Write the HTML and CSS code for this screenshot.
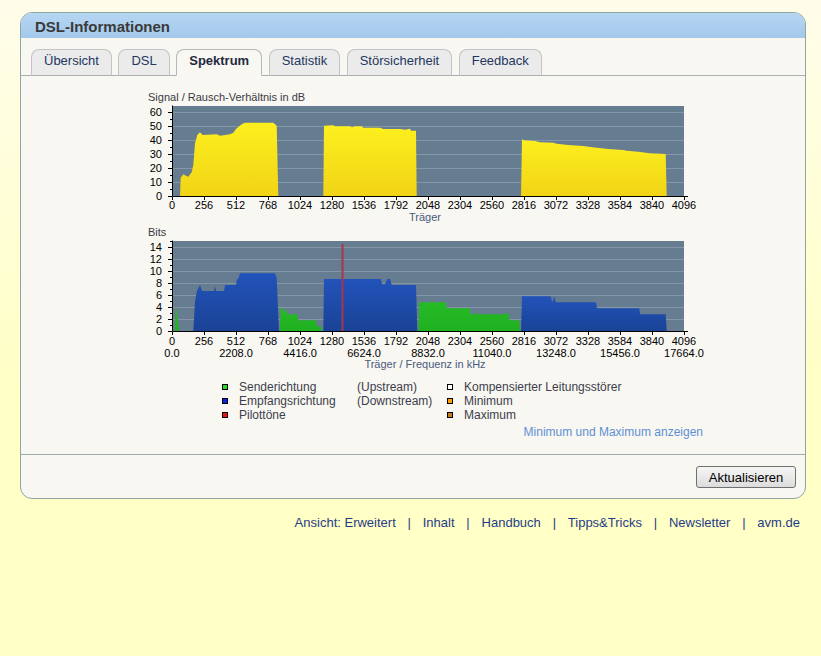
FILE: index.html
```html
<!DOCTYPE html>
<html lang="de">
<head>
<meta charset="utf-8">
<title>DSL-Informationen</title>
<link rel="stylesheet" href="styles.css">
</head>
<body>
<div class="page">
  <div class="box">
    <div class="box-head"><h1>DSL-Informationen</h1></div>
    <div class="box-body">
      <ul class="tabs">
        <li class="tab">Übersicht</li>
        <li class="tab">DSL</li>
        <li class="tab active">Spektrum</li>
        <li class="tab">Statistik</li>
        <li class="tab">Störsicherheit</li>
        <li class="tab">Feedback</li>
      </ul>
      <div class="content">
        <svg class="charts" width="570" height="290" viewBox="140 86 570 290" xmlns="http://www.w3.org/2000/svg">
          <defs>
            <linearGradient id="gy" x1="0" y1="0" x2="0" y2="1">
              <stop offset="0" stop-color="#fdef1e"/>
              <stop offset="1" stop-color="#f1d416"/>
            </linearGradient>
            <linearGradient id="gb" x1="0" y1="0" x2="0" y2="1">
              <stop offset="0" stop-color="#2253ba"/>
              <stop offset="1" stop-color="#1a4396"/>
            </linearGradient>
            <linearGradient id="gg" x1="0" y1="0" x2="0" y2="1">
              <stop offset="0" stop-color="#26bb26"/>
              <stop offset="1" stop-color="#20b020"/>
            </linearGradient>
          </defs>

          <!-- Chart 1: SNR -->
          <text class="ctitle" x="148" y="101">Signal / Rausch-Verhältnis in dB</text>
          <rect x="172" y="106" width="512" height="90" fill="#667c90"/>
          <path class="grid" d="M173 182.5H684M173 168.5H684M173 154.5H684M173 140.5H684M173 126.5H684M173 112.5H684"/>
          <polygon fill="url(#gy)" points="180,196 180.7,177.7 183.3,174.3 186,175.7 188.3,176.7 191.7,172.3 193.3,165 195,143.3 197.3,135 200,132.3 202.7,135 216.7,134.3 220,135.7 230,134.3 233.3,132.7 236.7,128.3 241.7,124.3 245,122.7 273.3,122.7 276.7,125.7 278.3,196"/>
          <polygon fill="url(#gy)" points="323.3,196 324,125.7 333,125.3 335,126.3 350,126.3 352,127.3 355,126.3 362,126.3 363,127.7 380,127.7 383,129 400,129 405,129.7 410,128.7 411,130.7 416,130.7 416.7,196"/>
          <polygon fill="url(#gy)" points="521,196 522,139 523.3,140.3 535,141 540,142.3 553.3,142.7 556.7,143.7 568.3,145 583.3,146 596.7,147.7 608.3,149 623.3,150 626.7,150.7 638.3,151.7 650,153.3 665.7,154 666.7,196"/>
          <path class="axis" d="M172.5 105.5V196.5H688"/>
          <path class="axis" d="M168 196.5H172M168 182.5H172M168 168.5H172M168 154.5H172M168 140.5H172M168 126.5H172M168 112.5H172M170 189.5H172M170 175.5H172M170 161.5H172M170 147.5H172M170 133.5H172M170 119.5H172"/>
          <path class="axis" d="M172.5 197V200M204.5 197V200M236.5 197V200M268.5 197V200M300.5 197V200M332.5 197V200M364.5 197V200M396.5 197V200M428.5 197V200M460.5 197V200M492.5 197V200M524.5 197V200M556.5 197V200M588.5 197V200M620.5 197V200M652.5 197V200M684.5 197V200"/>
          <g class="ylab">
            <text x="162" y="200">0</text>
            <text x="162" y="186">10</text>
            <text x="162" y="172">20</text>
            <text x="162" y="158">30</text>
            <text x="162" y="144">40</text>
            <text x="162" y="130">50</text>
            <text x="162" y="116">60</text>
          </g>
          <g class="xlab">
            <text x="172" y="209">0</text>
            <text x="204" y="209">256</text>
            <text x="236" y="209">512</text>
            <text x="268" y="209">768</text>
            <text x="300" y="209">1024</text>
            <text x="332" y="209">1280</text>
            <text x="364" y="209">1536</text>
            <text x="396" y="209">1792</text>
            <text x="428" y="209">2048</text>
            <text x="460" y="209">2304</text>
            <text x="492" y="209">2560</text>
            <text x="524" y="209">2816</text>
            <text x="556" y="209">3072</text>
            <text x="588" y="209">3328</text>
            <text x="620" y="209">3584</text>
            <text x="652" y="209">3840</text>
            <text x="684" y="209">4096</text>
          </g>
          <text class="atitle" x="425" y="221">Träger</text>

          <!-- Chart 2: Bits -->
          <text class="ctitle" x="148" y="236">Bits</text>
          <rect x="172" y="241" width="512" height="90" fill="#667c90"/>
          <path class="grid" d="M173 319.5H684M173 307.5H684M173 295.5H684M173 283.5H684M173 271.5H684M173 259.5H684M173 247.5H684"/>
          <polygon fill="url(#gg)" points="175,331 175.7,308 176.7,311 178.3,324 179,331"/>
          <polygon fill="url(#gb)" points="193.3,331 195,301.7 196.7,291.7 198.3,288.3 200,285 201.7,290 202.7,291 214,291 215,286 216,291 224,291 225,285 236,285 236.7,280 238.7,277.7 240,273.3 275,273.3 276.7,278.3 279,331"/>
          <polygon fill="url(#gg)" points="280,331 280.7,308.3 283.3,308.3 284.3,312.3 286.7,310 287.7,314.3 297.3,314.3 298.3,320.3 316,320.3 316.7,326.3 321,326.3 321.7,331"/>
          <polygon fill="url(#gb)" points="323.3,331 324,279 380.7,279 382.3,284.3 385,284.3 387.3,279 390,279 391.7,285 416,285 417.3,331"/>
          <polygon fill="url(#gg)" points="418.3,331 419.3,302.3 446,302.3 446.7,308.3 470,308.3 470.7,314.3 476,314.3 476.7,310.3 477.7,314.3 505,314.3 506,312 507,314.3 509,314.3 509.3,320.3 519.3,320.3 520,331"/>
          <polygon fill="url(#gb)" points="521,331 522,296.3 550.7,296.3 552.3,302.3 554.3,296.3 555.7,302.3 596,302.3 597,308.3 639.3,308.3 640,314.3 665.7,314.3 666.7,331"/>
          <path d="M342.5 244V331" stroke="#a8344e" stroke-width="2"/>
          <path class="axis" d="M172.5 240.5V331.5H688"/>
          <path class="axis" d="M168 331.5H172M168 319.5H172M168 307.5H172M168 295.5H172M168 283.5H172M168 271.5H172M168 259.5H172M168 247.5H172M170 325.5H172M170 313.5H172M170 301.5H172M170 289.5H172M170 277.5H172M170 265.5H172M170 253.5H172M170 241.5H172"/>
          <path class="axis" d="M172.5 332V335M204.5 332V335M236.5 332V335M268.5 332V335M300.5 332V335M332.5 332V335M364.5 332V335M396.5 332V335M428.5 332V335M460.5 332V335M492.5 332V335M524.5 332V335M556.5 332V335M588.5 332V335M620.5 332V335M652.5 332V335M684.5 332V335"/>
          <g class="ylab">
            <text x="162" y="335">0</text>
            <text x="162" y="323">2</text>
            <text x="162" y="311">4</text>
            <text x="162" y="299">6</text>
            <text x="162" y="287">8</text>
            <text x="162" y="275">10</text>
            <text x="162" y="263">12</text>
            <text x="162" y="251">14</text>
          </g>
          <g class="xlab">
            <text x="172" y="345">0</text>
            <text x="204" y="345">256</text>
            <text x="236" y="345">512</text>
            <text x="268" y="345">768</text>
            <text x="300" y="345">1024</text>
            <text x="332" y="345">1280</text>
            <text x="364" y="345">1536</text>
            <text x="396" y="345">1792</text>
            <text x="428" y="345">2048</text>
            <text x="460" y="345">2304</text>
            <text x="492" y="345">2560</text>
            <text x="524" y="345">2816</text>
            <text x="556" y="345">3072</text>
            <text x="588" y="345">3328</text>
            <text x="620" y="345">3584</text>
            <text x="652" y="345">3840</text>
            <text x="684" y="345">4096</text>
          </g>
          <g class="xlab">
            <text x="172" y="357">0.0</text>
            <text x="236" y="357">2208.0</text>
            <text x="300" y="357">4416.0</text>
            <text x="364" y="357">6624.0</text>
            <text x="428" y="357">8832.0</text>
            <text x="492" y="357">11040.0</text>
            <text x="556" y="357">13248.0</text>
            <text x="620" y="357">15456.0</text>
            <text x="684" y="357">17664.0</text>
          </g>
          <text class="atitle" x="425" y="368">Träger / Frequenz in kHz</text>
        </svg>

        <div class="legend">
          <span class="sq sq-green"></span><span>Senderichtung</span><span>(Upstream)</span><span class="sq sq-white"></span><span>Kompensierter Leitungsstörer</span>
          <span class="sq sq-blue"></span><span>Empfangsrichtung</span><span>(Downstream)</span><span class="sq sq-orange"></span><span>Minimum</span>
          <span class="sq sq-red"></span><span>Pilottöne</span><span></span><span class="sq sq-brown"></span><span>Maximum</span>
        </div>
        <div class="link-row"><a class="minmax" href="#">Minimum und Maximum anzeigen</a></div>
      </div>
      <div class="actions"><button class="btn" type="button">Aktualisieren</button></div>
    </div>
  </div>
  <div class="footer">
    <a href="#">Ansicht: Erweitert</a><span class="sep">|</span>
    <a href="#">Inhalt</a><span class="sep">|</span>
    <a href="#">Handbuch</a><span class="sep">|</span>
    <a href="#">Tipps&amp;Tricks</a><span class="sep">|</span>
    <a href="#">Newsletter</a><span class="sep">|</span>
    <a href="#">avm.de</a>
  </div>
</div>
</body>
</html>
```

FILE: styles.css
```css
html, body {
  margin: 0;
  padding: 0;
}
body {
  min-height: 656px;
  background-color: #ffffc6;
  background-image: linear-gradient(#fffdea 0, #ffffc6 380px);
  background-repeat: no-repeat;
  font-family: "Liberation Sans", Arial, sans-serif;
}
.page {
  padding: 12px 15px 0 20px;
}
.box {
  border: 1px solid #8fa7a3;
  border-radius: 12px;
  overflow: hidden;
  background: #f8f7f2;
}
.box-head {
  height: 23px;
  padding-top: 2px;
  background: linear-gradient(#b6d6f2, #a3c8eb);
}
.box-head h1 {
  margin: 0;
  padding-left: 14px;
  font-size: 15px;
  line-height: 23px;
  font-weight: bold;
  color: #3a3a3a;
}
.tabs {
  display: flex;
  gap: 6.5px;
  margin: 0;
  padding: 11px 0 0 10px;
  list-style: none;
  border-bottom: 1px solid #a9b1b0;
}
.tab {
  height: 22px;
  line-height: 22px;
  padding: 0 12px 3px;
  margin-bottom: -1px;
  border: 1px solid #c4c4c4;
  border-bottom-color: #a9b1b0;
  border-radius: 8px 8px 0 0;
  background: #ebebeb;
  font-size: 13px;
  color: #24375f;
  white-space: nowrap;
}
.tab.active {
  background: #f8f7f2;
  border-color: #b4b8b8;
  border-bottom-color: #f8f7f2;
  font-weight: bold;
  color: #1f2a40;
}
.content {
  display: flex;
  flex-direction: column;
  padding: 10px 0 15px 0;
}
.charts {
  display: block;
  margin-left: 119px;
}
.charts text {
  font-family: "Liberation Sans", Arial, sans-serif;
  font-size: 11px;
}
.charts .ctitle {
  fill: #3a3a44;
}
.charts .atitle {
  fill: #4a5a7c;
  text-anchor: middle;
}
.charts .ylab text {
  text-anchor: end;
  fill: #000;
}
.charts .xlab text {
  text-anchor: middle;
  fill: #000;
}
.charts .grid {
  stroke: #8496a8;
  stroke-width: 1;
  fill: none;
}
.charts .axis {
  stroke: #000;
  stroke-width: 1;
  fill: none;
}
.legend {
  display: grid;
  grid-template-columns: 17px 118px 90px 17px auto;
  grid-auto-rows: 14px;
  align-items: center;
  margin: 4px 0 0 201px;
  font-size: 12px;
  line-height: 14px;
  color: #3d3d4d;
}
.sq {
  display: block;
  width: 4px;
  height: 4px;
  border: 1px solid #000;
}
.sq-green { background: #22dd22; }
.sq-blue { background: #0b24ea; }
.sq-red { background: #f01010; }
.sq-white { background: #ffffff; }
.sq-orange { background: #ffa000; }
.sq-brown { background: #c47c1e; }
.link-row {
  width: 481px;
  margin: 3px 0 0 201px;
  text-align: right;
  font-size: 12px;
  line-height: 14px;
}
.minmax {
  color: #5f8fd3;
  text-decoration: none;
}
.actions {
  display: flex;
  justify-content: flex-end;
  padding: 11px 9px 10px;
  border-top: 1px solid #a0acab;
}
.btn {
  width: 100px;
  height: 22px;
  padding: 0;
  border: 1px solid #707070;
  border-radius: 3px;
  background: linear-gradient(#f6f6f6, #dcdcdc);
  font-family: "Liberation Sans", Arial, sans-serif;
  font-size: 13px;
  color: #000;
}
.footer {
  display: flex;
  justify-content: flex-end;
  margin-top: 16px;
  padding-right: 6px;
  font-size: 13px;
  line-height: 16px;
  color: #1f3d86;
}
.footer a {
  color: #1f3d86;
  text-decoration: none;
}
.footer .sep {
  margin: 0 11.8px;
}
```
